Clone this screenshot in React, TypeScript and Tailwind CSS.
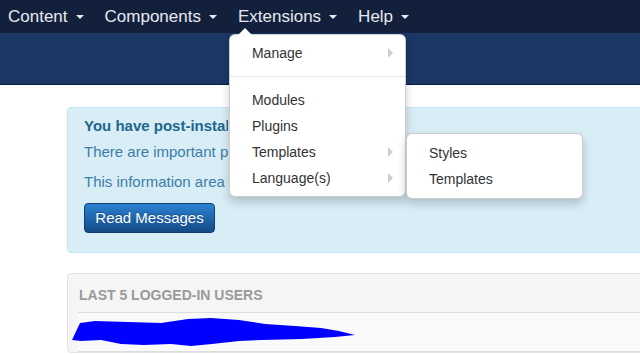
import { Fragment } from 'react'

const navItems = ['Content', 'Components', 'Extensions', 'Help']

function Caret() {
  return <span className="ml-[8px] inline-block h-0 w-0 border-x-[4px] border-t-[4px] border-x-transparent border-t-[#e6e9ef]" />
}

function SubArrow() {
  return <span className="absolute right-[12px] top-1/2 -translate-y-1/2 h-0 w-0 border-y-[5px] border-l-[5px] border-y-transparent border-l-[#cccccc]" />
}

function MenuItem({ label, sub }: { label: string; sub?: boolean }) {
  return (
    <div className="relative h-[26px] leading-[26px] pl-[22px] text-[#333333]">
      {label}
      {sub && <SubArrow />}
    </div>
  )
}

function ExtensionsMenu() {
  return (
    <div className="absolute left-[-9px] top-[34px] z-20 w-[177px] rounded-[6px] border border-black/20 bg-white pt-[5px] pb-[5px] text-[14px] shadow-[0_5px_10px_rgba(0,0,0,0.2)]">
      {/* pointer */}
      <span className="absolute left-[8px] top-[-7px] h-0 w-0 border-x-[7px] border-b-[7px] border-x-transparent border-b-white" />
      <MenuItem label="Manage" sub />
      <div className="my-[10px] h-px bg-[#e5e5e5]" />
      <MenuItem label="Modules" />
      <MenuItem label="Plugins" />
      <MenuItem label="Templates" sub />
      <MenuItem label="Language(s)" sub />

      {/* Templates submenu */}
      <div className="absolute left-[176px] top-[98px] w-[177px] rounded-[6px] border border-black/20 bg-white pt-[6px] pb-[6px] shadow-[0_5px_10px_rgba(0,0,0,0.2)]">
        <div className="h-[26px] leading-[26px] pl-[22px] text-[#333333]">Styles</div>
        <div className="h-[26px] leading-[26px] pl-[22px] text-[#333333]">Templates</div>
      </div>
    </div>
  )
}

function Scribble() {
  return (
    <svg width="285" height="30" viewBox="0 0 285 30" className="-ml-[7px] block">
      <polygon
        fill="#0000ff"
        points="1,22 9,5 24,3 57,4 90,5 117,1 140,0 168,2 194,6 224,8 250,10 268,13 284,17 264,19 231,21 191,22 168,23 141,26 120,28 100,26 73,27 50,26 30,22 10,23"
      />
    </svg>
  )
}

export default function App() {
  return (
    <div className="relative h-[354px] w-[640px] overflow-hidden bg-white font-['Liberation_Sans',Arial,sans-serif]">
      {/* Top navbar */}
      <nav className="flex h-[33px] items-stretch gap-[21px] bg-[#13203c] pl-[8px] text-[17px] text-[#e6e9ef]">
        {navItems.map(item => (
          <Fragment key={item}>
            <div className="relative flex items-center">
              <span>{item}</span>
              <Caret />
              {item === 'Extensions' && <ExtensionsMenu />}
            </div>
          </Fragment>
        ))}
      </nav>

      {/* Header bar */}
      <div className="h-[52px] border-b border-[#0b1843] bg-[#1a3766]" />

      <main className="pl-[67px] pt-[22px]">
        {/* Post-install alert */}
        <div className="w-[620px] rounded-[4px] border border-[#bce8f1] bg-[#d9edf7] pl-[16px] pt-[8px] pb-[19px] text-[15px] text-[#3a7ea6]">
          <h4 className="h-[20px] w-[144px] overflow-hidden whitespace-nowrap font-bold leading-[20px] text-[#1d668c]">You have post-installation messages</h4>
          <p className="mt-[6px] w-[144px] overflow-hidden whitespace-nowrap leading-[20px]">There are important post-installation</p>
          <p className="mt-[10px] w-[144px] overflow-hidden whitespace-nowrap leading-[20px]">This information area won't appear</p>
          <button className="mt-[11px] h-[30px] w-[131px] rounded-[4px] border border-[#0f3e70] bg-linear-to-b from-[#2b82d2] to-[#144a86] text-[15px] text-white [text-shadow:0_-1px_0_rgba(0,0,0,0.25)]">
            Read Messages
          </button>
        </div>

        {/* Last logged-in users */}
        <div className="mt-[20px] w-[620px] rounded-[4px] border border-[#e3e3e3] bg-[#f5f5f5] pl-[10px]">
          <h2 className="pt-[13px] pb-[8px] pl-[1px] text-[14px] font-bold uppercase leading-[17px] text-[#999999]">
            Last 5 Logged-in Users
          </h2>
          <div className="h-[40px] border-y border-[#dddddd] bg-[#fafafa] pt-[5px]">
            <Scribble />
          </div>
        </div>
      </main>
    </div>
  )
}
